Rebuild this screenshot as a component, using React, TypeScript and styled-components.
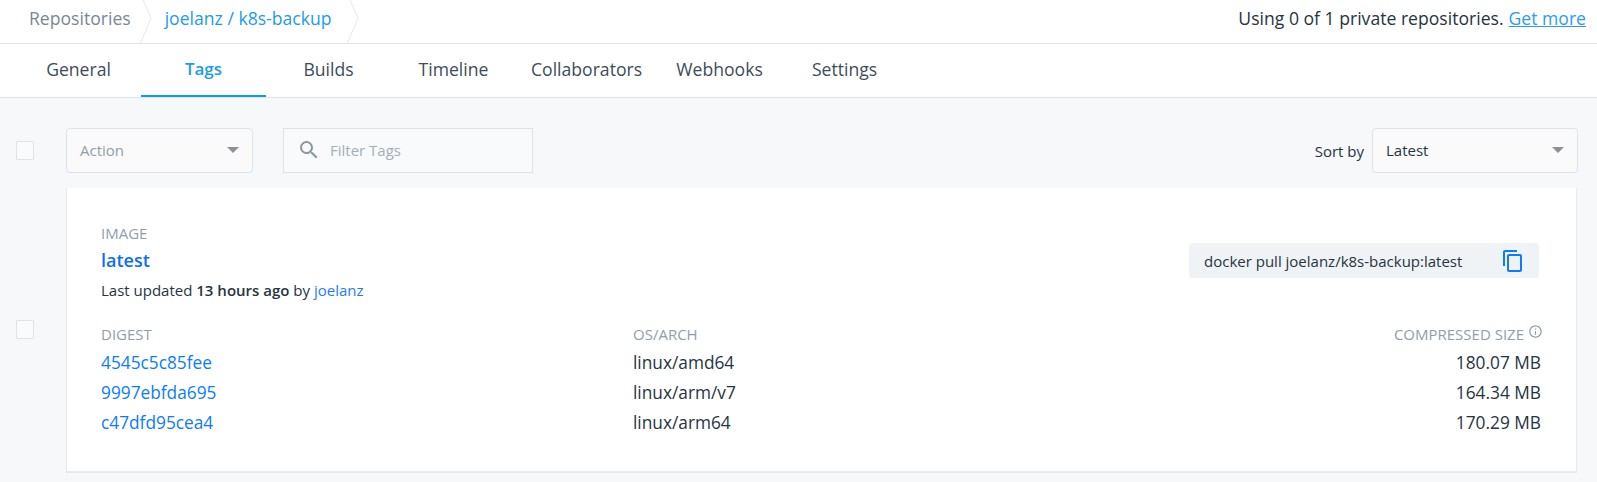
import React from "react";
import styled, { createGlobalStyle } from "styled-components";
import { MdContentCopy, MdInfoOutline, MdSearch } from "react-icons/md";

const GlobalStyle = createGlobalStyle`
  html, body {
    margin: 0;
    padding: 0;
    height: 482px;
    overflow: hidden;
    background: #f7f8fa;
    font-family: "Open Sans", "Liberation Sans", sans-serif;
    color: #27343f;
  }
  * {
    box-sizing: border-box;
  }
`;

const TopBar = styled.div`
  display: flex;
  justify-content: space-between;
  align-items: stretch;
  height: 44px;
  padding: 0 11px 0 29px;
  background: #fff;
  border-bottom: 1px solid #e1e4e8;
  font-size: 17.6px;
`;

const Crumbs = styled.div`
  display: flex;
  align-items: stretch;
`;

const Crumb = styled.a<{ $active?: boolean }>`
  display: flex;
  align-items: center;
  height: 35px;
  color: ${(p) => (p.$active ? "#1d9bf0" : "#7a8792")};
`;

const Chevron = styled.svg<{ $left: number; $right: number }>`
  width: 12px;
  height: 43px;
  margin: 0 ${(p) => p.$right}px 0 ${(p) => p.$left}px;
  flex: none;
`;

const Usage = styled.div`
  height: 35px;
  display: flex;
  align-items: center;
  gap: 5px;
  color: #27343f;
`;

const GetMore = styled.a`
  color: #2b9cf2;
  text-decoration: underline;
`;

const TabBar = styled.div`
  display: flex;
  height: 54px;
  padding-left: 16px;
  background: #fff;
  border-bottom: 1px solid #e1e4e8;
`;

const Tab = styled.div<{ $active?: boolean }>`
  min-width: 125px;
  padding: 0 15px 2px;
  display: flex;
  align-items: center;
  justify-content: center;
  font-size: ${(p) => (p.$active ? 17 : 17.6)}px;
  font-weight: ${(p) => (p.$active ? 600 : 400)};
  color: ${(p) => (p.$active ? "#1d9bf0" : "#3e4c57")};
  border-bottom: 2px solid ${(p) => (p.$active ? "#099cec" : "transparent")};
`;

const Toolbar = styled.div`
  display: flex;
  align-items: center;
  padding: 30px 19px 0 16px;
`;

const Check = styled.span`
  display: block;
  width: 18px;
  height: 19px;
  flex: none;
  background: #fafbfb;
  border: 1px solid #dfe3e7;
  border-radius: 1px;
`;

const Select = styled.div<{ $width: number; $muted?: boolean }>`
  width: ${(p) => p.$width}px;
  height: 45px;
  padding: 0 13px 2px 13px;
  display: flex;
  align-items: center;
  justify-content: space-between;
  font-size: 15px;
  background: #fafafa;
  border: 1px solid #dfe3e7;
  border-radius: 4px;
  color: ${(p) => (p.$muted ? "#8f9ea8" : "#27343f")};
`;

const Caret = styled.span`
  width: 0;
  height: 0;
  border-left: 6px solid transparent;
  border-right: 6px solid transparent;
  border-top: 6px solid #8c9197;
`;

const ActionSlot = styled.div`
  margin-left: 32px;
`;

const Search = styled.div`
  width: 250px;
  height: 45px;
  margin-left: 30px;
  padding: 0 0 2px 13px;
  display: flex;
  align-items: center;
  gap: 9px;
  font-size: 15px;
  color: #a3afb8;
  background: #f9fafb;
  border: 1px solid #dfe3e7;

  svg {
    color: #8a979f;
    flex: none;
  }
`;

const SortGroup = styled.div`
  margin-left: auto;
  display: flex;
  align-items: center;
  gap: 8px;
  font-size: 15px;
  color: #27343f;
`;

const Row = styled.div`
  display: flex;
  align-items: center;
  padding: 15px 20px 0 16px;
`;

const CheckCell = styled.div`
  width: 50px;
  padding-bottom: 2px;
  flex: none;
`;

const Card = styled.div`
  flex: 1;
  height: 285px;
  padding: 35px 35px 0 34px;
  background: #fff;
  border-style: solid;
  border-width: 0 1px 2px 1px;
  border-color: #e8eaed;
`;

const CardHead = styled.div`
  display: flex;
  justify-content: space-between;
  align-items: flex-start;
`;

const Label = styled.div<{ $right?: boolean }>`
  display: flex;
  align-items: flex-start;
  justify-content: ${(p) => (p.$right ? "flex-end" : "flex-start")};
  gap: 4px;
  font-size: 15px;
  line-height: 20px;
  color: #8f9ea8;
  text-transform: uppercase;

  svg {
    flex: none;
    margin: 0 -2px 0 0;
  }
`;

const TagName = styled.a`
  display: block;
  margin-top: 5px;
  font-size: 18px;
  line-height: 24px;
  font-weight: 600;
  color: #0b6ef9;
`;

const Meta = styled.div`
  margin-top: 8px;
  font-size: 15px;
  line-height: 20px;
  color: #27343f;

  b {
    font-weight: 600;
  }
  a {
    color: #1f7bff;
  }
`;

const PullBox = styled.div`
  width: 350px;
  height: 35px;
  margin: 20px 2px 0 0;
  padding: 0 14px 0 15px;
  display: flex;
  align-items: center;
  justify-content: space-between;
  font-size: 15px;
  background: #f0f3f6;
  border-radius: 3px;
  color: #27343f;

  svg {
    color: #0b7bff;
    flex: none;
  }
`;

const Table = styled.div`
  margin-top: 24px;
  display: grid;
  grid-template-columns: 532px 1fr 300px;
  row-gap: 7px;
`;

const Cell = styled.div<{ $right?: boolean }>`
  font-size: 17.3px;
  line-height: 23px;
  text-align: ${(p) => (p.$right ? "right" : "left")};
  color: #27343f;
`;

const Digest = styled.a`
  color: #0b7bff;
`;

const images = [
  { digest: "4545c5c85fee", arch: "linux/amd64", size: "180.07 MB" },
  { digest: "9997ebfda695", arch: "linux/arm/v7", size: "164.34 MB" },
  { digest: "c47dfd95cea4", arch: "linux/arm64", size: "170.29 MB" },
];

const tabs = ["General", "Tags", "Builds", "Timeline", "Collaborators", "Webhooks", "Settings"];

export default function App() {
  return (
    <>
      <GlobalStyle />
      <TopBar>
        <Crumbs>
          <Crumb>Repositories</Crumb>
          <Chevron $left={9} $right={13} viewBox="0 0 12 43">
            <path d="M3 0L11 18L0.5 43" fill="none" stroke="#e6e8eb" />
          </Chevron>
          <Crumb $active>joelanz / k8s-backup</Crumb>
          <Chevron $left={15} $right={0} viewBox="0 0 12 43">
            <path d="M3 0L11 18L0.5 43" fill="none" stroke="#e6e8eb" />
          </Chevron>
        </Crumbs>
        <Usage>
          Using 0 of 1 private repositories. <GetMore>Get more</GetMore>
        </Usage>
      </TopBar>
      <TabBar>
        {tabs.map((t) => (
          <Tab key={t} $active={t === "Tags"}>
            {t}
          </Tab>
        ))}
      </TabBar>
      <Toolbar>
        <Check />
        <ActionSlot>
          <Select $width={187} $muted>
            Action
            <Caret />
          </Select>
        </ActionSlot>
        <Search>
          <MdSearch size={24} />
          Filter Tags
        </Search>
        <SortGroup>
          Sort by
          <Select $width={206}>
            Latest
            <Caret />
          </Select>
        </SortGroup>
      </Toolbar>
      <Row>
        <CheckCell>
          <Check />
        </CheckCell>
        <Card>
          <CardHead>
            <div>
              <Label>Image</Label>
              <TagName>latest</TagName>
              <Meta>
                Last updated <b>13 hours ago</b> by <a>joelanz</a>
              </Meta>
            </div>
            <PullBox>
              docker pull joelanz/k8s-backup:latest
              <MdContentCopy size={24} />
            </PullBox>
          </CardHead>
          <Table>
            <Label>Digest</Label>
            <Label>OS/ARCH</Label>
            <Label $right>
              Compressed size
              <MdInfoOutline size={15} />
            </Label>
            {images.map((img) => (
              <React.Fragment key={img.digest}>
                <Cell>
                  <Digest>{img.digest}</Digest>
                </Cell>
                <Cell>{img.arch}</Cell>
                <Cell $right>{img.size}</Cell>
              </React.Fragment>
            ))}
          </Table>
        </Card>
      </Row>
    </>
  );
}
